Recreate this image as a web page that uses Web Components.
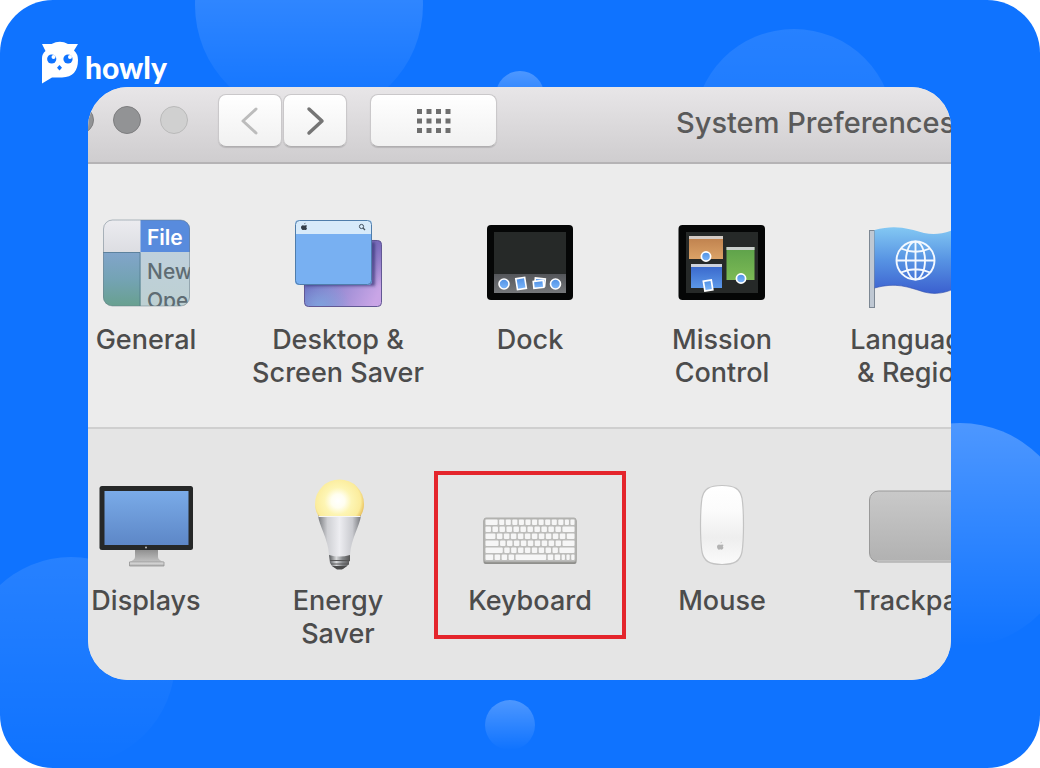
<!DOCTYPE html>
<html lang="en">
<head>
<meta charset="utf-8">
<meta name="viewport" content="width=device-width, initial-scale=1">
<title>System Preferences</title>
<style>
  html, body { margin: 0; min-height: 100%; background: #fff; }
  body { font-family: Inter, "Liberation Sans", sans-serif; }
</style>
</head>
<body>
<howly-frame>
  <howly-logo slot="logo">howly</howly-logo>
  <prefs-window>
    <prefs-toolbar slot="toolbar">System Preferences</prefs-toolbar>
    <prefs-row>
      <pref-tile icon="general">General</pref-tile>
      <pref-tile icon="desktop">Desktop &amp;<br>Screen Saver</pref-tile>
      <pref-tile icon="dock">Dock</pref-tile>
      <pref-tile icon="mission">Mission<br>Control</pref-tile>
      <pref-tile icon="language">Language<br>&amp; Region</pref-tile>
    </prefs-row>
    <prefs-row shaded>
      <pref-tile icon="displays">Displays</pref-tile>
      <pref-tile icon="energy">Energy<br>Saver</pref-tile>
      <pref-tile icon="keyboard" marked>Keyboard</pref-tile>
      <pref-tile icon="mouse">Mouse</pref-tile>
      <pref-tile icon="trackpad">Trackpad</pref-tile>
    </prefs-row>
  </prefs-window>
</howly-frame>

<script>
const define = (name, render) => customElements.define(name, class extends HTMLElement {
  constructor() { super(); this.attachShadow({ mode: 'open' }); }
  connectedCallback() { this.shadowRoot.innerHTML = render(this); }
});

const APPLE = 'M4.2 1.6C4.2.7 4.9 0 5.7-.2 5.8.8 5 1.6 4.2 1.6ZM6.9 5.3C6.9 4.3 7.6 3.8 7.7 3.7 7.2 2.9 6.3 2.8 6 2.8 5.2 2.8 4.7 3.2 4.2 3.2 3.7 3.2 3.1 2.8 2.5 2.8.9 2.9 0 4.2 0 5.6 0 7.2 1.3 9 2.3 9 2.9 9 3.2 8.6 4 8.6 4.8 8.6 5 9 5.7 9 6.7 9 7.4 7.6 7.7 6.9 7.2 6.7 6.9 6 6.9 5.3Z';

const KEY_ROWS = [
  [12, 5, 5, 5, 5, 5, 5, 5, 5, 5, 5, 4, 4],
  [5, 5, 5, 5, 5, 5, 5, 5, 5, 5, 5, 11],
  [9, 5, 5, 5, 5, 5, 5, 5, 5, 5, 5, 7],
  [12, 5, 5, 5, 5, 5, 5, 5, 5, 5, 11],
  [16, 5, 5, 5, 5, 5, 5, 5, 5, 14],
  [7, 5, 5, 5, 28, 5, 5, 3, 3, 3]
];
const keys = () => KEY_ROWS.map((row, r) => {
  const scale = (89 - 1.5 * (row.length - 1)) / row.reduce((a, b) => a + b);
  let x = 3.5;
  return row.map(w => {
    const width = w * scale;
    const key = `<rect x="${x.toFixed(2)}" y="${43.5 + r * 7}" width="${width.toFixed(2)}" height="5.500" rx="1"/>`;
    x += width + 1.5;
    return key;
  }).join('');
}).join('');

const grad = (id, ...stops) => `<linearGradient id="${id}" x1="0" y1="0" x2="0" y2="1">${
  stops.map((c, i) => `<stop offset="${i / (stops.length - 1)}" stop-color="${c}"/>`).join('')}</linearGradient>`;

const ICONS = {
  general: `
    <defs>${grad('a', '#ececf0', '#dcdde2')}${grad('b', '#82a5cb', '#74a3b4', '#68a08e')}
      ${grad('c', '#bfd0dc', '#bdd0d2')}<clipPath id="k"><rect x="5" y="5" width="87" height="86" rx="9"/></clipPath></defs>
    <g clip-path="url(#k)">
      <rect x="5" y="4" width="38" height="34" fill="url(#a)"/>
      <rect x="5" y="37" width="38" height="55" fill="url(#b)"/>
      <rect x="42.500" y="4" width="50" height="33" fill="#588bdd"/>
      <rect x="42.500" y="37" width="50" height="55" fill="url(#c)"/>
      <path d="M5 37.500H42M42 37.500V92" stroke="#456b80" stroke-opacity=".6"/>
      <g font-family="Inter, sans-serif" font-size="21">
        <text x="49" y="30" fill="#fff" font-weight="600">File</text>
        <text x="49" y="64" fill="#5e6c73" font-weight="500">New</text>
        <text x="49" y="93" fill="#5e6c73" font-weight="500">Ope</text>
      </g>
    </g>
    <rect x="5.500" y="5" width="86" height="86" rx="9" fill="none" stroke="#6a7c88" stroke-opacity=".5"/>`,
  desktop: `
    <defs><linearGradient id="p" x1="0" y1=".3" x2="1" y2=".7"><stop stop-color="#5a5fb8"/><stop offset=".45" stop-color="#8f86cf"/><stop offset="1" stop-color="#c9a5e6"/></linearGradient>
      <radialGradient id="q" cx=".2" cy="1" r=".4"><stop stop-color="#7fa2dd"/><stop offset="1" stop-color="#7fa2dd" stop-opacity="0"/></radialGradient>
      <radialGradient id="r" cx="1" cy="0" r=".7"><stop stop-color="#7568b8"/><stop offset="1" stop-color="#7568b8" stop-opacity="0"/></radialGradient>
      <filter id="s" x="-20%" y="-20%" width="140%" height="140%"><feGaussianBlur stdDeviation="1.500"/></filter>
      <clipPath id="k"><rect x="5" y="5" width="77" height="65" rx="4"/></clipPath></defs>
    <rect x="14.500" y="25.500" width="77" height="66" rx="4" fill="url(#p)"/>
    <rect x="14.500" y="25.500" width="77" height="66" rx="4" fill="url(#q)"/>
    <rect x="14.500" y="25.500" width="77" height="66" rx="4" fill="url(#r)" stroke="#625894"/>
    <path d="M15 69H83V27" fill="none" stroke="#2d2d70" stroke-opacity=".7" stroke-width="4" filter="url(#s)"/>
    <g clip-path="url(#k)"><rect x="5" y="5" width="77" height="65" fill="#78b0f2"/><rect x="5" y="5" width="77" height="14" fill="#d7eafa"/></g>
    <rect x="5.500" y="5.500" width="76" height="64" rx="4" fill="none" stroke="#4f7dab"/>
    <path d="${APPLE}" transform="translate(11 8) scale(.78)" fill="#333d48"/>
    <circle cx="71.500" cy="11.500" r="2.100" fill="none" stroke="#44525f"/><path d="M73 13l2 2" stroke="#44525f" stroke-width="1.300"/>`,
  dock: `
    <defs>${grad('a', '#54565a', '#75777a')}${grad('b', '#4f90e4', '#7cb6fa')}</defs>
    <rect x="5" y="10" width="86" height="75" rx="4" fill="#050606"/>
    <rect x="12" y="17" width="72" height="42" fill="#262928"/><rect x="12" y="59" width="72" height="19" fill="url(#a)"/>
    <g fill="url(#b)" stroke="#fff" stroke-width="1.600">
      <circle cx="22" cy="69" r="5"/><circle cx="73.500" cy="69" r="5"/>
      <rect x="34.500" y="63" width="9" height="11" transform="rotate(-9 39 68)"/>
      <rect x="53" y="63.500" width="10" height="7" transform="rotate(6 58 67)"/>
      <rect x="51.500" y="66" width="10" height="7" transform="rotate(-6 56 69)"/></g>`,
  mission: `
    <defs>${grad('a', '#bd7f4c', '#dba267')}${grad('g', '#5da14a', '#7cba55')}${grad('c', '#3663c9', '#5c98e8')}${grad('b', '#4f90e4', '#7cb6fa')}</defs>
    <rect x="4.500" y="10" width="86.500" height="75" rx="4" fill="#050606"/><rect x="12" y="17" width="72" height="61" fill="#262928"/>
    <rect x="15" y="21" width="34" height="23" fill="url(#a)"/><path d="M15 22.500H49" stroke="#d4cbc5" stroke-width="3"/>
    <rect x="52.500" y="32" width="28" height="33" fill="url(#g)"/><path d="M52.500 33.500H80.500" stroke="#cbd0cd" stroke-width="3"/>
    <rect x="17" y="49" width="31" height="24" fill="url(#c)"/><path d="M17 50.500H48" stroke="#cdd2dc" stroke-width="3"/>
    <g fill="url(#b)" stroke="#fff" stroke-width="1.700"><circle cx="32" cy="41.500" r="4.600"/><circle cx="67" cy="63.500" r="4.600"/>
      <rect x="30" y="65.500" width="8" height="10" transform="rotate(-9 34 70)"/></g>`,
  language: `
    <defs>${grad('f', '#83c8f3', '#5793e3', '#3b60cf')}</defs>
    <rect x="3.500" y="15.500" width="5" height="77" fill="#bfc8d3" stroke="#7c8793"/>
    <path d="M8.500 15C30 9 44 14 58 18 69 20 78 19 92 13V72C80 78 70 80 58 77 42 72 30 67 8.500 73Z" fill="url(#f)"/>
    <path d="M8.500 73C30 67 42 72 58 77 70 80 80 78 92 72" fill="none" stroke="#2f4fae" stroke-opacity=".6"/>
    <g fill="none" stroke="#f4f9ff" stroke-width="1.900"><circle cx="49.500" cy="45.500" r="19"/><ellipse cx="49.500" cy="45.500" rx="9.500" ry="19"/>
      <path d="M49.500 26.500V64.500M30.500 45.500H68.500M35 33.500Q49.500 40 64 33.500M35 57.500Q49.500 51 64 57.500"/></g>`,
  displays: `
    <defs>${grad('a', '#7aabe8', '#5d87c7')}${grad('b', '#8c8c8c', '#d2d2d2')}${grad('c', '#e8e8e8', '#aaaaaa')}</defs>
    <path d="M37 73H60V81Q60 84 66 86V90H31V86Q37 84 37 81Z" fill="url(#b)"/>
    <path d="M31.500 86H66V90H31.500Z" fill="url(#c)" stroke="#969696" stroke-width=".8"/>
    <rect x="1.500" y="10" width="93.500" height="64" rx="2.500" fill="#262828"/>
    <rect x="6.500" y="15" width="84" height="54" fill="url(#a)"/><circle cx="48" cy="71.500" r="1" fill="#bbb"/>`,
  energy: `
    <defs><radialGradient id="y" gradientUnits="userSpaceOnUse" cx="48" cy="25" r="27"><stop stop-color="#fff"/><stop offset=".25" stop-color="#fffef0"/><stop offset=".5" stop-color="#fdf5b4"/><stop offset=".84" stop-color="#fbec9c"/><stop offset="1" stop-color="#e8bf5c"/></radialGradient>
      <linearGradient id="w"><stop stop-color="#77797d"/><stop offset=".22" stop-color="#cfd0d4"/><stop offset=".5" stop-color="#ededf1"/><stop offset=".8" stop-color="#c9cacf"/><stop offset="1" stop-color="#75777b"/></linearGradient>
      <linearGradient id="m"><stop stop-color="#55575a"/><stop offset=".35" stop-color="#d9dadc"/><stop offset=".65" stop-color="#85878a"/><stop offset="1" stop-color="#555"/></linearGradient></defs>
    <path d="M39 79H60V84L59 86V88L57 90 53 93H47L42 90 40 87Z" fill="url(#m)"/>
    <path d="M40 84.500H60M41 88H59" stroke="#565656"/><path d="M42 90H57L52 93.500H47Z" fill="#4b4b4b"/>
    <path d="M28 39H71C70 50 61 62 60 79Q49.500 82 39 79C38 62 29 50 28 39Z" fill="url(#w)"/>
    <path d="M28.500 40Q25 35 25 28A24.500 24.500 0 0 1 74 28Q74 35 70.500 40Z" fill="url(#y)"/>
    <path d="M28.500 40.500H70.500" stroke="#f6f6f6"/>`,
  keyboard: `
    <rect x="1.500" y="43" width="93" height="45" rx="2" fill="#8f8f8c"/>
    <rect x="2" y="42" width="92" height="44" rx="2" fill="#bdbdbb" stroke="#a2a2a0" stroke-width=".8"/>
    <g fill="#f6f6f6">${keys()}</g>`,
  mouse: `
    <defs>${grad('a', '#ffffff', '#fbfbfb', '#eeeeee', '#fbfbfb')}</defs>
    <path d="M48 9.500C61 9.500 66 13 68 22 70 35 70 63 68 76 66 85 61 88.500 48 88.500S30 85 28 76C26 63 26 35 28 22 30 13 35 9.500 48 9.500Z" fill="url(#a)" stroke="#c3c3c3" stroke-width="1.200"/>
    <path d="${APPLE}" transform="translate(43 66) scale(.85)" fill="#b3b3b3"/>`,
  trackpad: `
    <defs>${grad('a', '#c9c9c9', '#b1b1b1')}</defs>
    <rect x="3.500" y="15" width="100" height="71" rx="9" fill="url(#a)" stroke="#999"/>
    <path d="M11 85H92" stroke="#d0d0d0"/>`
};

define('howly-frame', () => `
  <style>
    :host { display: block; position: relative; overflow: hidden; box-sizing: border-box; min-height: 100vh;
      padding: 40px 89px 88px 88px; border-radius: 53px; background: #0f73ff; }
    .bubbles { position: absolute; inset: 0; width: 100%; height: 100%; }
    ::slotted(*) { position: relative; }
    header { display: flex; height: 47px; margin-left: -48px; }
  </style>
  <svg class="bubbles" viewBox="0 0 1040 768" preserveAspectRatio="xMidYMid slice" aria-hidden="true">
    <defs><linearGradient id="fade" x1="0" y1="0" x2="0" y2="1"><stop stop-color="#fff" stop-opacity=".26"/><stop offset="1" stop-color="#fff" stop-opacity="0"/></linearGradient>
    <linearGradient id="soft" x1="0" y1="0" x2="0" y2="1"><stop stop-color="#fff" stop-opacity=".1"/><stop offset="1" stop-color="#fff" stop-opacity="0"/></linearGradient></defs>
    <g fill="url(#fade)">
      <circle cx="309" cy="5" r="114"/><circle cx="520" cy="95" r="24"/>
      <circle cx="960" cy="535" r="112"/><circle cx="510" cy="725" r="25"/>
    </g>
    <circle cx="794" cy="129" r="100" fill="url(#soft)"/><circle cx="71" cy="661" r="104" fill="url(#soft)"/>
  </svg>
  <header><slot name="logo"></slot></header>
  <slot></slot>`);

define('howly-logo', () => `
  <style>
    :host { display: flex; color: #fff; font: 900 30px/34px Lato, sans-serif; }
    a { display: flex; gap: 7px; color: inherit; text-decoration: none; }
    span { margin-top: 10px; }
    svg { display: block; width: 38px; height: 46px; }
  </style>
  <a href="#">
    <svg viewBox="0 0 38 46" aria-hidden="true">
      <path d="M2 43.500V18Q2 14 5.500 11L2 4 11.500 4Q20 -.5 28 4L38 4 34 10.500Q38 14 38 20 38 37 22 37.500H12Z" fill="#fff"/>
      <circle cx="11.700" cy="19" r="4.600" fill="#0f73ff"/><circle cx="28" cy="19" r="4.600" fill="#0f73ff"/>
      <circle cx="13.500" cy="17" r="2" fill="#fff"/><circle cx="30" cy="17" r="2" fill="#fff"/>
      <path d="M19.500 25L22 27.700 19.500 30.500 17 27.700Z" fill="#0f73ff"/>
    </svg>
    <span><slot></slot></span>
  </a>`);

define('prefs-window', () => `
  <style>
    :host { display: block; overflow: hidden; border-radius: 40px; background: #e5e5e5; color: #4c4c4c; }
  </style>
  <slot name="toolbar"></slot><slot></slot>`);

define('prefs-toolbar', () => `
  <style>
    :host { display: flex; align-items: flex-start; box-sizing: border-box; height: 77px; padding-top: 7px;
      border-bottom: 2px solid #b5b3b5; background: linear-gradient(#e8e6e8, #cfcdcf); }
    .lights { display: flex; gap: 19px; margin: 12px 30px 0 -22px; }
    .lights i { box-sizing: border-box; width: 28px; height: 28px; border: 1px solid #7d7d7f; border-radius: 50%; background: #929395; }
    .lights i:last-child { border-color: #b9b9b9; background: #d0d0d0; }
    button { display: grid; place-items: center; box-sizing: border-box; flex: none; width: 64px; height: 53px; margin: 0 1px 0 0; padding: 0;
      border: 1px solid #cac8ca; border-bottom-color: #b0aeb0; border-radius: 8px; background: linear-gradient(#fff, #f1f1f1); box-shadow: 0 1px 1px #0002; }
    .all { width: 127px; margin-left: 22px; }
    h1 { flex: none; margin: 12px 0 0 178px; font-size: 29px; line-height: 34px; font-weight: 500; white-space: nowrap; color: #5a5a5a; }
    svg { display: block; }
  </style>
  <div class="lights"><i></i><i></i><i></i></div>
  <button aria-label="Back"><svg width="30" height="34"><path d="M21 5L8 17 21 29" fill="none" stroke="#bcbcbc" stroke-width="3" stroke-linecap="round" stroke-linejoin="round"/></svg></button>
  <button aria-label="Forward"><svg width="30" height="34"><path d="M9 5L22 17 9 29" fill="none" stroke="#757575" stroke-width="3.500" stroke-linecap="round" stroke-linejoin="round"/></svg></button>
  <button class="all" aria-label="Show All"><svg width="34" height="24"><path d="M0 2.500H34M0 12H34M0 21.500H34" stroke="#6e6e6e" stroke-width="5" stroke-dasharray="5 4.500"/></svg></button>
  <h1><slot></slot></h1>`);

define('prefs-row', () => `
  <style>
    :host { display: grid; grid-template-columns: repeat(5, minmax(0, 1fr)); margin: 0 -59px 0 -38px;
      padding: 51px 0 38px; background: #ececec; border-bottom: 2px solid #cfcfcf; }
    :host([shaded]) { padding: 47px 0 30px; background: #e5e5e5; border-bottom: 0; }
  </style>
  <slot></slot>`);

define('pref-tile', el => `
  <style>
    :host { display: block; position: relative; }
    button { display: flex; flex-direction: column; align-items: center; gap: 12px; width: 100%; margin: 0; padding: 0; border: 0; background: none;
      color: inherit; font: inherit; font-size: 27px; line-height: 33px; font-weight: 500; }
    svg { display: block; width: 96px; height: 96px; }
    span { min-height: 66px; white-space: nowrap; }
    :host([marked])::after { content: ""; position: absolute; inset: -5px 0 11px; border: 4px solid #e4252c; pointer-events: none; }
  </style>
  <button>
    <svg viewBox="0 0 96 96" aria-hidden="true">${ICONS[el.getAttribute('icon')]}</svg>
    <span><slot></slot></span>
  </button>`);
</script>
</body>
</html>
